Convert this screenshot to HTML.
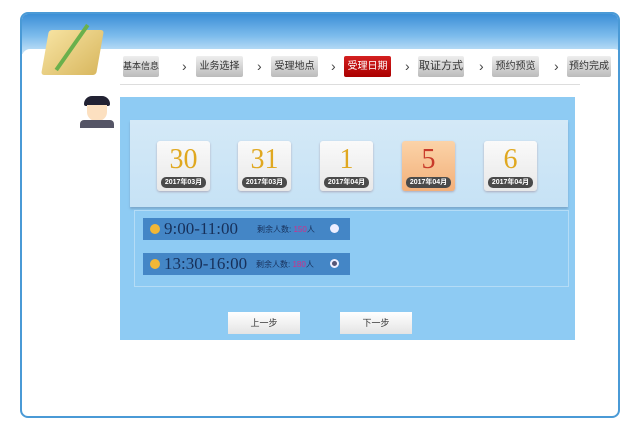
<!DOCTYPE html>
<html><head><meta charset="utf-8"><style>
*{margin:0;padding:0;box-sizing:border-box}
body{width:640px;height:433px;background:#fff;position:relative;overflow:hidden;font-family:"Liberation Sans","Noto Sans CJK SC",sans-serif}
.abs{position:absolute}
.frame{left:20px;top:12px;width:600px;height:406px;border:2px solid #4a9ad6;border-radius:8px;background:#fff;overflow:hidden}
.hdr{left:0;top:0;width:600px;height:40px;background:linear-gradient(180deg,#3c8fd6 0%,#7dbcec 55%,#c8e4f8 100%)}
.step{height:21px;top:56px;font-size:10px;color:#333;background:linear-gradient(#eee,#bbb);border-radius:2px;text-align:center;line-height:21px;white-space:nowrap;overflow:hidden}
.chev{top:58px;font-size:14px;color:#444}
.card{top:141px;width:53px;height:50px;background:linear-gradient(#fafafa,#e8e8e8);border-radius:3px;box-shadow:0 1px 2px #aab}
.card .n{position:absolute;left:0;right:0;top:3px;text-align:center;font-family:"Liberation Serif",serif;font-size:28px;color:#e0a820;line-height:32px}
.card .d{position:absolute;left:4px;right:4px;top:36px;height:11px;background:#4a4a4a;border-radius:5px;color:#fff;font-size:7px;text-align:center;line-height:11px;font-weight:bold}
.slot{left:143px;width:207px;height:22px;background:#4486c6;color:#fff}
.slot .dot{position:absolute;left:7px;top:6px;width:10px;height:10px;border-radius:50%;background:#f2b736}
.slot .t{position:absolute;left:21px;top:1px;font-size:17px;font-family:"Liberation Serif",serif;color:#17305a}
.slot .r{position:absolute;top:6px;font-size:8px;color:#17305a}
.slot .c{position:absolute;left:187px;top:6px;width:9px;height:9px;border-radius:50%;background:#eef}
.btn{top:312px;width:72px;height:22px;background:linear-gradient(#fff,#e4e4e4);font-size:9px;text-align:center;line-height:22px;color:#333}
</style></head><body>
<div class="abs frame">
 <div class="abs hdr"></div>
 <div class="abs" style="left:0;top:35px;width:600px;height:10px;background:#fff;border-radius:8px 8px 0 0"></div>
</div>
<div class="abs" style="left:45px;top:30px;width:55px;height:45px;background:linear-gradient(135deg,#f6e2a0,#d9b860);transform:skewX(-10deg);border-radius:3px"></div>
<div class="abs" style="left:70px;top:20px;width:4px;height:55px;background:#6ab04c;transform:rotate(35deg)"></div>
<div class="abs" style="left:120px;top:84px;width:460px;height:1px;background:#ddd"></div>
<div class="abs step" style="left:123px;width:36px;font-size:9px">基本信息</div>
<div class="abs chev" style="left:182px">›</div>
<div class="abs step" style="left:196px;width:47px">业务选择</div>
<div class="abs chev" style="left:257px">›</div>
<div class="abs step" style="left:271px;width:47px">受理地点</div>
<div class="abs chev" style="left:331px">›</div>
<div class="abs step" style="left:344px;width:47px;background:linear-gradient(#d42020,#a00);color:#fff">受理日期</div>
<div class="abs chev" style="left:405px">›</div>
<div class="abs step" style="left:418px;width:46px;font-size:11px">取证方式</div>
<div class="abs chev" style="left:479px">›</div>
<div class="abs step" style="left:492px;width:47px">预约预览</div>
<div class="abs chev" style="left:554px">›</div>
<div class="abs step" style="left:567px;width:44px">预约完成</div>
<div class="abs" style="left:84px;top:96px;width:26px;height:10px;background:#223;border-radius:8px 8px 2px 2px"></div>
<div class="abs" style="left:87px;top:105px;width:20px;height:16px;background:#fce0c0;border-radius:0 0 9px 9px"></div>
<div class="abs" style="left:80px;top:120px;width:34px;height:8px;background:#556;border-radius:4px 4px 0 0"></div>
<div class="abs" style="left:120px;top:97px;width:455px;height:243px;background:#8ecbf3"></div>
<div class="abs" style="left:130px;top:120px;width:438px;height:87px;background:linear-gradient(#d4e9f7,#c6e2f5);box-shadow:0 2px 2px #7aa8cc"></div>
<div class="abs card" style="left:157px"><div class="n">30</div><div class="d">2017年03月</div></div>
<div class="abs card" style="left:238px"><div class="n">31</div><div class="d">2017年03月</div></div>
<div class="abs card" style="left:320px"><div class="n">1</div><div class="d">2017年04月</div></div>
<div class="abs card" style="left:402px;background:linear-gradient(#fbd3a8,#f3b07a)"><div class="n" style="color:#c83a2a">5</div><div class="d">2017年04月</div></div>
<div class="abs card" style="left:484px"><div class="n">6</div><div class="d">2017年04月</div></div>
<div class="abs" style="left:134px;top:210px;width:435px;height:77px;border:1px solid #b4dcf6"></div>
<div class="abs slot" style="top:218px"><div class="dot"></div><div class="t">9:00-11:00</div><div class="r" style="left:114px">剩余人数: <span style="color:#d0308a">150</span>人</div><div class="c"></div></div>
<div class="abs slot" style="top:253px"><div class="dot"></div><div class="t">13:30-16:00</div><div class="r" style="left:113px">剩余人数: <span style="color:#d0308a">180</span>人</div><div class="c" style="border:2px solid #eef;background:#557"></div></div>
<div class="abs btn" style="left:228px">上一步</div>
<div class="abs btn" style="left:340px">下一步</div>
</body></html>
